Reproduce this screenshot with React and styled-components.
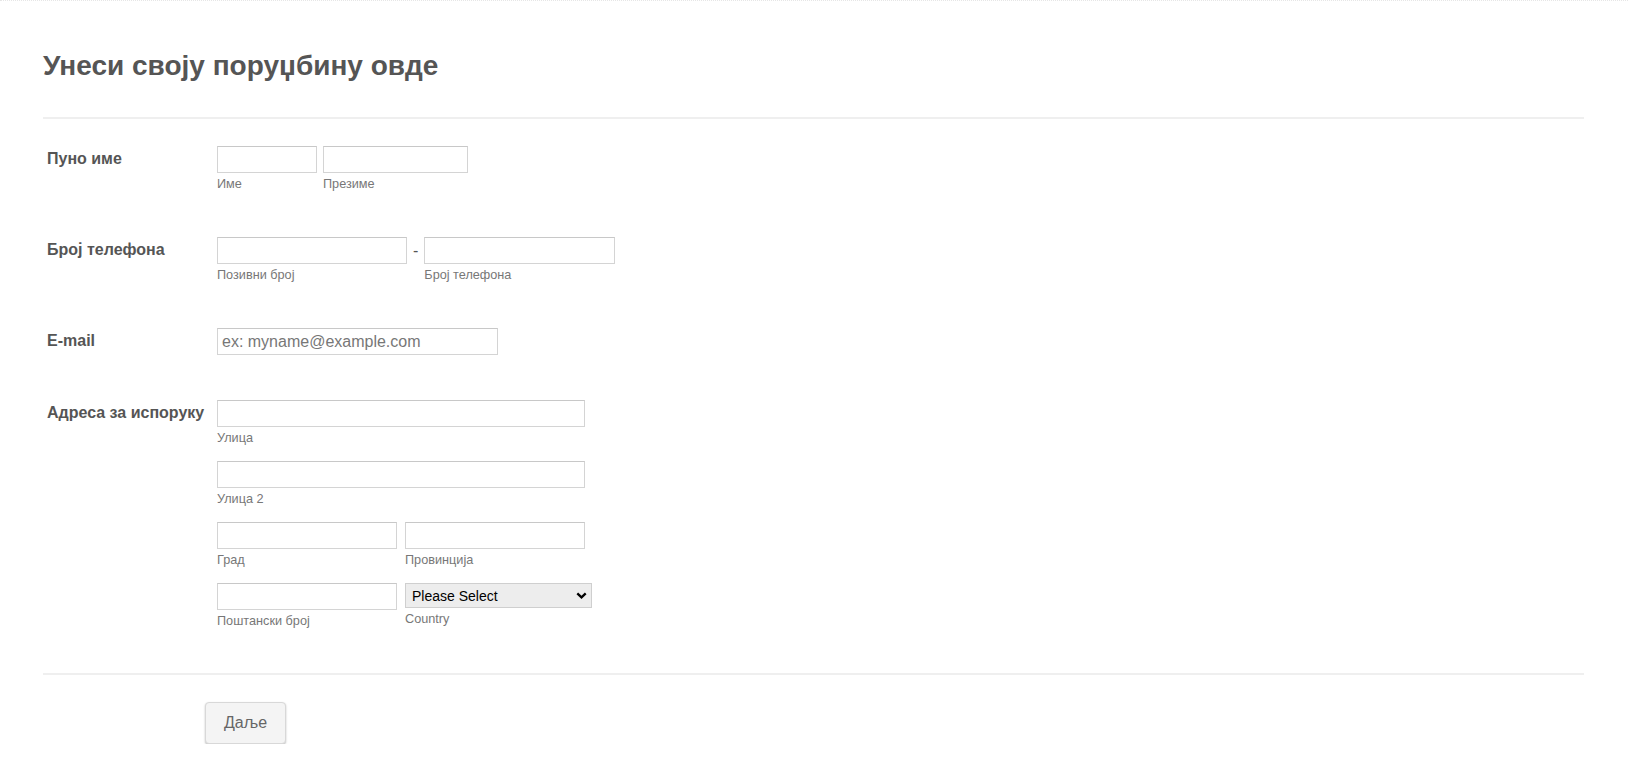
import styled, { createGlobalStyle } from 'styled-components';

const GlobalStyle = createGlobalStyle`
  body {
    margin: 0;
    background: #fff;
    font-family: "Liberation Sans", Arial, sans-serif;
  }
`;

const Page = styled.div`
  border-top: 1px dotted #e6e6e6;
  padding: 0 44px 0 43px;
`;

const Header = styled.div`
  padding: 49px 0 35px;
  border-bottom: 2px solid #efefef;

  h1 {
    margin: 0;
    font-size: 28px;
    font-weight: bold;
    color: #555;
  }
`;

const Rows = styled.div`
  display: flex;
  flex-direction: column;
  gap: 45px;
  padding: 27px 0 44px;
  border-bottom: 2px solid #efefef;
`;

const Row = styled.div`
  display: flex;
  align-items: flex-start;
  padding-left: 4px;
`;

const Label = styled.label`
  width: 170px;
  flex-shrink: 0;
  padding-top: 4px;
  font-size: 16px;
  font-weight: bold;
  color: #555;
`;

const Fields = styled.div`
  display: flex;
  flex-direction: column;
  gap: 15px;
`;

const Line = styled.div`
  display: flex;
  align-items: flex-start;
  gap: ${({ gap }) => gap || 8}px;
`;

const Field = styled.div`
  display: flex;
  flex-direction: column;
`;

const Input = styled.input`
  box-sizing: border-box;
  width: ${({ w }) => w}px;
  height: 27px;
  margin: 0;
  padding: 2px 4px;
  border: 1px solid #d4d4d4;
  border-top-color: #c8c8c8;
  background: #fff;
  font-family: "Liberation Sans", Arial, sans-serif;
  font-size: 16px;
  color: #333;
  outline: none;

  &::placeholder {
    color: #777;
  }
`;

const SelectWrap = styled.div`
  position: relative;
  width: ${({ w }) => w}px;
  height: 25px;

  svg {
    position: absolute;
    right: 5px;
    top: 9px;
    pointer-events: none;
  }
`;

const Select = styled.select`
  box-sizing: border-box;
  width: 100%;
  height: 100%;
  margin: 0;
  padding: 0 3px 0 6px;
  appearance: none;
  border: 1px solid #cfcfcf;
  border-radius: 0;
  background: #ededed;
  font-family: "Liberation Sans", Arial, sans-serif;
  font-size: 14px;
  color: #000;
  outline: none;
`;

const Sub = styled.span`
  margin-top: 4px;
  font-size: 12.7px;
  line-height: 15px;
  color: #777;
`;

const Dash = styled.span`
  align-self: flex-start;
  padding-top: 5px;
  font-size: 16px;
  color: #555;
`;

const Footer = styled.div`
  padding: 27px 0 0 162px;
`;

const Button = styled.button`
  height: 42px;
  padding: 0 18px;
  border: 1px solid #d8d8d8;
  border-radius: 4px;
  background: #f4f4f4;
  box-shadow: 0 1px 2px rgba(0, 0, 0, 0.25);
  font-family: "Liberation Sans", Arial, sans-serif;
  font-size: 16px;
  color: #666;
  cursor: pointer;
`;

const Chevron = () => (
  <svg width="11" height="7" viewBox="0 0 11 7">
    <path d="M1.3 1.3 L5.5 5.3 L9.7 1.3" fill="none" stroke="#000" strokeWidth="2.3" />
  </svg>
);

export default function App() {
  return (
    <Page>
      <GlobalStyle />
      <Header>
        <h1>Унеси своју поруџбину овде</h1>
      </Header>
      <Rows>
        <Row>
          <Label>Пуно име</Label>
          <Line gap={6}>
            <Field>
              <Input w={100} />
              <Sub>Име</Sub>
            </Field>
            <Field>
              <Input w={145} />
              <Sub>Презиме</Sub>
            </Field>
          </Line>
        </Row>
        <Row>
          <Label>Број телефона</Label>
          <Line gap={6}>
            <Field>
              <Input w={190} />
              <Sub>Позивни број</Sub>
            </Field>
            <Dash>-</Dash>
            <Field>
              <Input w={191} />
              <Sub>Број телефона</Sub>
            </Field>
          </Line>
        </Row>
        <Row>
          <Label>E-mail</Label>
          <Input w={281} placeholder="ex: myname@example.com" />
        </Row>
        <Row>
          <Label>Адреса за испоруку</Label>
          <Fields>
            <Field>
              <Input w={368} />
              <Sub>Улица</Sub>
            </Field>
            <Field>
              <Input w={368} />
              <Sub>Улица 2</Sub>
            </Field>
            <Line>
              <Field>
                <Input w={180} />
                <Sub>Град</Sub>
              </Field>
              <Field>
                <Input w={180} />
                <Sub>Провинција</Sub>
              </Field>
            </Line>
            <Line gap={8}>
              <Field>
                <Input w={180} />
                <Sub>Поштански број</Sub>
              </Field>
              <Field>
                <SelectWrap w={187}>
                  <Select defaultValue="">
                    <option value="">Please Select</option>
                    <option>Serbia</option>
                  </Select>
                  <Chevron />
                </SelectWrap>
                <Sub>Country</Sub>
              </Field>
            </Line>
          </Fields>
        </Row>
      </Rows>
      <Footer>
        <Button>Даље</Button>
      </Footer>
    </Page>
  );
}
